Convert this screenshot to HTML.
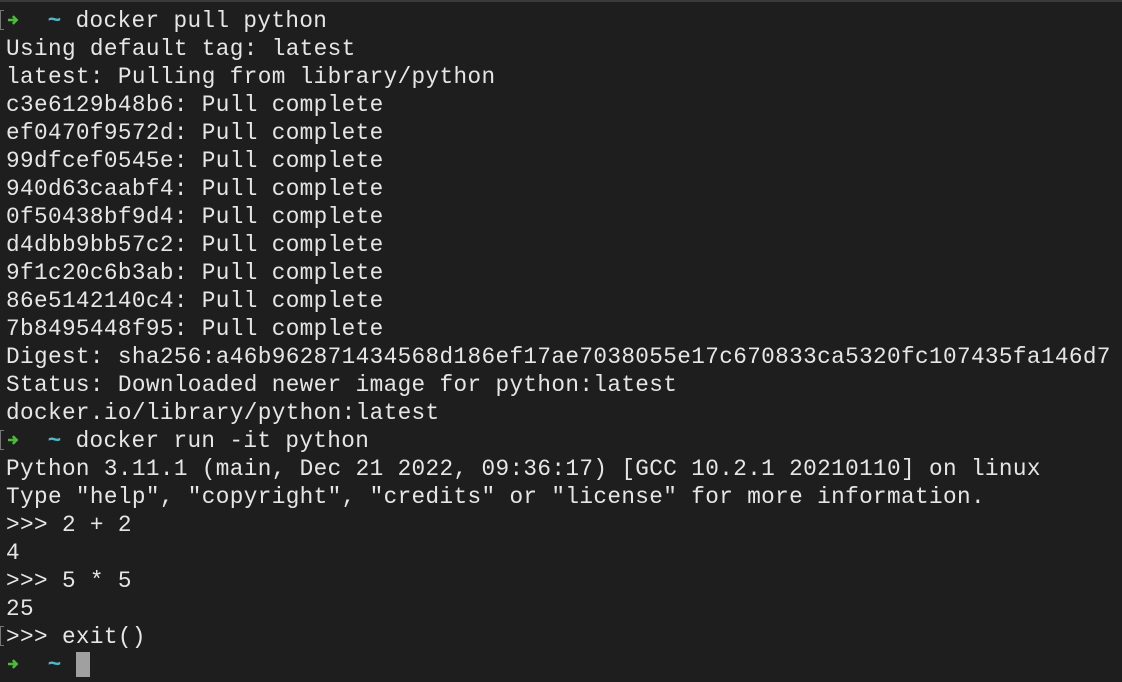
<!DOCTYPE html>
<html><head><meta charset="utf-8"><style>
html,body{margin:0;padding:0;width:1122px;height:682px;overflow:hidden;background:#1e1e1e;}
body{border-top:2px solid #3a3a3a;box-sizing:border-box;}
pre{margin:0;position:absolute;left:6px;top:7px;font-family:"Liberation Mono","DejaVu Sans Mono",monospace;font-size:22.7px;letter-spacing:0.37px;line-height:28px;color:#e6e6e6;white-space:pre;}
.c{color:#52b7c4;font-weight:bold}
.a{display:inline-block;width:13.6px;height:14px;vertical-align:0px;}
.m{position:absolute;left:0;width:3px;height:18px;border:1px solid #777;border-right:none;}
.cur{display:inline-block;width:14px;height:25px;background:#a0a0a0;vertical-align:-6px;}
</style></head><body>
<div class="m" style="top:10px"></div>
<div class="m" style="top:430px"></div>
<div class="m" style="top:626px"></div>
<pre><svg class="a" viewBox="0 0 14 14"><path d="M2 7H11M7 3L11 7L7 11" stroke="#4fb83e" stroke-width="2.6" fill="none"/></svg>  <span class="c">~</span> docker pull python
Using default tag: latest
latest: Pulling from library/python
c3e6129b48b6: Pull complete
ef0470f9572d: Pull complete
99dfcef0545e: Pull complete
940d63caabf4: Pull complete
0f50438bf9d4: Pull complete
d4dbb9bb57c2: Pull complete
9f1c20c6b3ab: Pull complete
86e5142140c4: Pull complete
7b8495448f95: Pull complete
Digest: sha256:a46b962871434568d186ef17ae7038055e17c670833ca5320fc107435fa146d7
Status: Downloaded newer image for python:latest
docker.io/library/python:latest
<svg class="a" viewBox="0 0 14 14"><path d="M2 7H11M7 3L11 7L7 11" stroke="#4fb83e" stroke-width="2.6" fill="none"/></svg>  <span class="c">~</span> docker run -it python
Python 3.11.1 (main, Dec 21 2022, 09:36:17) [GCC 10.2.1 20210110] on linux
Type "help", "copyright", "credits" or "license" for more information.
&gt;&gt;&gt; 2 + 2
4
&gt;&gt;&gt; 5 * 5
25
&gt;&gt;&gt; exit()
<svg class="a" viewBox="0 0 14 14"><path d="M2 7H11M7 3L11 7L7 11" stroke="#4fb83e" stroke-width="2.6" fill="none"/></svg>  <span class="c">~</span> <span class="cur"></span></pre>
</body></html>
